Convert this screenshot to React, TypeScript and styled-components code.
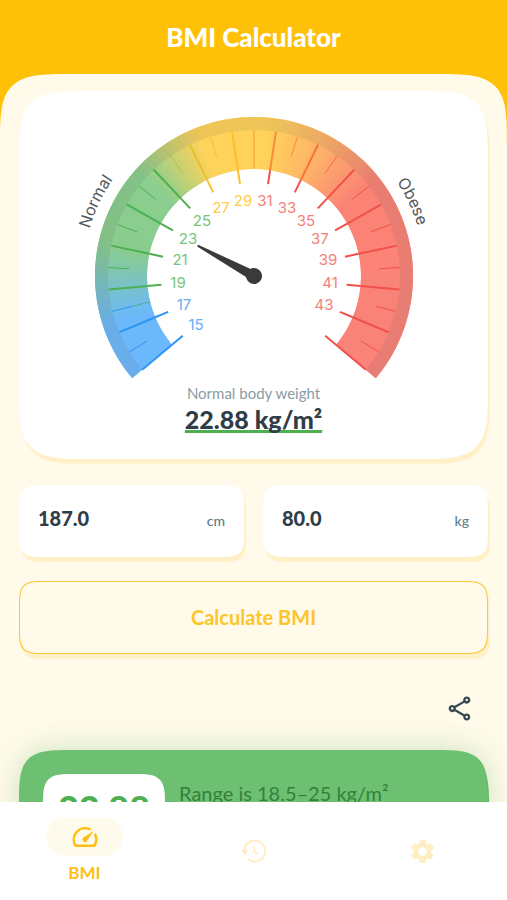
import React, { useState } from "react";
import styled, { createGlobalStyle } from "styled-components";
import { MdOutlineShare, MdOutlineSpeed, MdSettings } from "react-icons/md";

const AMBER = "#ffc107";
const CREAM = "#fffaea";
const SHADOW = "#fff0c8";
const INK = "#2f3e46";
const SLATE = "#607d8b";
const GREEN = "#4caf50";

const GlobalStyle = createGlobalStyle`
  *, *::before, *::after { box-sizing: border-box; }
  body { margin: 0; background: ${CREAM}; }
  button, input { font: inherit; }
`;

const Screen = styled.div`
  height: 100vh;
  display: flex;
  flex-direction: column;
  font-family: Lato, "Open Sans", sans-serif;
  color: ${INK};
  background: ${CREAM};
`;

const Content = styled.main`
  flex: 1;
  min-height: 0;
  overflow-y: auto;
  scrollbar-width: none;
  background: ${AMBER};
`;

const Header = styled.header`
  padding: 21px 20px;
  text-align: center;
`;

const Title = styled.h1`
  margin: 0;
  font-size: 26px;
  line-height: 32px;
  font-weight: 900;
  color: #fff;
`;

const Sheet = styled.section`
  display: flex;
  flex-direction: column;
  padding: 17px 19px 40px;
  background: ${CREAM};
  border-radius: 76px 76px 0 0;
  corner-shape: squircle;
`;

const GaugeCard = styled.section`
  display: flex;
  flex-direction: column;
  align-items: center;
  padding: 13px 16px 24px;
  background: #fff;
  border-radius: 76px;
  corner-shape: squircle;
  box-shadow: 2px 5px 1px ${SHADOW};
`;

const GaugeSvg = styled.svg`
  display: block;
  width: 100%;
  max-width: 380px;
  height: auto;
`;

const Caption = styled.p`
  margin: 3px 0 0;
  font-size: 15px;
  line-height: 20px;
  color: #8b9ca4;
`;

const Result = styled.p`
  margin: 0;
  font-size: 25px;
  line-height: 32px;
  font-weight: 900;
  text-decoration: underline 3px ${GREEN};
  text-underline-offset: 1px;
  text-decoration-skip-ink: none;
`;

const Fields = styled.div`
  display: grid;
  grid-template-columns: repeat(2, minmax(0, 1fr));
  gap: 19px;
  margin-top: 26px;
`;

const Field = styled.label`
  display: flex;
  align-items: baseline;
  gap: 8px;
  padding: 19px 19px 25px;
  background: #fff;
  border-radius: 28px;
  corner-shape: squircle;
  box-shadow: 2px 5px 1px ${SHADOW};
`;

const FieldInput = styled.input`
  flex: 1;
  width: 0;
  min-width: 0;
  height: 28px;
  padding: 0;
  border: 0;
  outline: 0;
  background: transparent;
  color: ${INK};
  font-size: 20px;
  font-weight: 900;
`;

const Unit = styled.span`
  font-size: 14px;
  line-height: 20px;
  font-weight: 500;
  color: ${SLATE};
`;

const CalculateButton = styled.button`
  margin-top: 24px;
  height: 73px;
  padding: 0 0 2px;
  border: 1px solid #f8c835;
  border-radius: 28px;
  corner-shape: squircle;
  background: ${CREAM};
  box-shadow: 2px 5px 1px ${SHADOW};
  color: #fcc52a;
  font-size: 20px;
  font-weight: 700;
`;

const ShareButton = styled.button`
  align-self: flex-end;
  display: grid;
  place-items: center;
  width: 48px;
  height: 48px;
  margin: 30px 5px 18px 0;
  padding: 0;
  border: 0;
  background: transparent;
  color: #37474f;
`;

const RangeCard = styled.section`
  display: flex;
  gap: 14px;
  padding: 24px;
  background: #6dc071;
  border-radius: 76px;
  corner-shape: squircle;
  box-shadow: 0 0 28px rgba(76, 175, 80, 0.3), 1px 5px 0 ${GREEN};
`;

const Badge = styled.div`
  padding: 14px 0;
  width: 122px;
  text-align: center;
  background: #fff;
  border-radius: 40px;
  corner-shape: squircle;
  font-size: 36px;
  line-height: 40px;
  font-weight: 900;
  color: ${GREEN};
`;

const RangeText = styled.p`
  margin: 7px 0 0;
  font-size: 20px;
  line-height: 24px;
  color: #34813a;
`;

const Nav = styled.nav`
  flex: none;
  display: grid;
  grid-template-columns: repeat(3, 1fr);
  align-items: start;
  height: 98px;
  padding-top: 16px;
  background: #fff;
`;

const NavItem = styled.button<{ $active?: boolean }>`
  display: flex;
  flex-direction: column;
  align-items: center;
  justify-content: ${(p) => (p.$active ? "flex-start" : "center")};
  height: 66px;
  padding: 0;
  border: 0;
  background: transparent;
  color: ${(p) => (p.$active ? "#fdbf14" : "#ffedc3")};
`;

const NavPill = styled.span`
  display: grid;
  place-items: center;
  width: 77px;
  height: 38px;
  border-radius: 19px;
  background: #fffbec;
`;

const NavLabel = styled.span`
  margin-top: 6px;
  font-size: 17px;
  line-height: 22px;
  font-weight: 700;
`;

type Rgb = [number, number, number];

const MIN = 15;
const MAX = 45;
const CX = 190;
const CY = 172;

const angleOf = (value: number) =>
  ((220 - ((value - MIN) / (MAX - MIN)) * 260) * Math.PI) / 180;

const pointAt = (radius: number, angle: number) =>
  `${(CX + radius * Math.cos(angle)).toFixed(2)} ${(CY - radius * Math.sin(angle)).toFixed(2)}`;

const ringPath = (from: number, to: number, inner: number, outer: number) => {
  const a = angleOf(from);
  const b = angleOf(to);
  const large = a - b > Math.PI ? 1 : 0;
  return `M${pointAt(outer, a)}A${outer} ${outer} 0 ${large} 1 ${pointAt(outer, b)}L${pointAt(inner, b)}A${inner} ${inner} 0 ${large} 0 ${pointAt(inner, a)}Z`;
};

const STOPS: [number, Rgb][] = [
  [15, [108, 184, 252]],
  [17.5, [108, 184, 250]],
  [21, [137, 205, 141]],
  [24.5, [139, 206, 143]],
  [27.5, [255, 211, 90]],
  [30.5, [255, 211, 90]],
  [33, [254, 181, 103]],
  [36, [251, 131, 117]],
  [45, [250, 131, 122]],
];

const colorAt = (value: number) => {
  const i = Math.max(1, STOPS.findIndex(([stop]) => stop >= value));
  const [v0, c0] = STOPS[i - 1];
  const [v1, c1] = STOPS[i];
  const t = (value - v0) / (v1 - v0);
  return `rgb(${c0.map((c, k) => Math.round(c + (c1[k] - c) * t)).join(",")})`;
};

const STEP = 0.25;
const SEGMENTS = Array.from({ length: (MAX - MIN) / STEP }, (_, i) => MIN + i * STEP);
const VALUES = Array.from({ length: MAX - MIN + 1 }, (_, i) => MIN + i);

const scaleColor = (value: number, blue: string, green: string, amber: string, red: string) =>
  value < 18.5 ? blue : value <= 25 ? green : value < 30 ? amber : red;

const RING_TICKS: Record<number, string> = {
  26: "#b5bf48",
  27: "#ebbf2c",
  30: "#f0953a",
  31: "#fb8a3a",
  32: "#fb8a3a",
  33: "#f9703a",
  34: "#f8683c",
};

const tickColor = (value: number) => scaleColor(value, "#2e95f2", "#4caf50", "#fbc02d", "#f2504a");

function Tick({ value }: { value: number }) {
  const a = angleOf(value);
  const major = value % 2 === 1;
  const ringColor = RING_TICKS[value] ?? tickColor(value);
  if (!major) {
    const inner = value === 30 ? 107 : 125;
    return (
      <g strokeWidth={1}>
        <path d={`M${pointAt(146, a)}L${pointAt(inner, a)}`} stroke={ringColor} />
        {value === 18 && <path d={`M${pointAt(125, a)}L${pointAt(107, a)}`} stroke="#4caf8c" />}
      </g>
    );
  }
  return (
    <g strokeWidth={2}>
      <path d={`M${pointAt(146, a)}L${pointAt(107, a)}`} stroke={ringColor} />
      <path d={`M${pointAt(107, a)}L${pointAt(93, a)}`} stroke={tickColor(value)} />
    </g>
  );
}

function Gauge({ value }: { value: number }) {
  const rotation = 180 - (angleOf(value) * 180) / Math.PI;
  return (
    <GaugeSvg viewBox="0 0 380 276" role="img" aria-label={`BMI gauge at ${value}`}>
      <defs>
        <path id="scale-label-arc" d={`M${CX - 171} ${CY}A171 171 0 0 1 ${CX + 171} ${CY}`} />
      </defs>
      {SEGMENTS.map((v) => (
        <path key={v} d={ringPath(v, Math.min(MAX, v + STEP * 2), 107, 159)} fill={colorAt(v + STEP / 2)} />
      ))}
      <path d={ringPath(MIN, MAX, 146, 159)} fill="#50504a" fillOpacity={0.1} />
      {VALUES.map((v) => (
        <Tick key={v} value={v} />
      ))}
      <g fontFamily="Inter, sans-serif" fontSize={15} textAnchor="middle">
        {VALUES.filter((v) => v % 2 === 1 && v < MAX).map((v) => {
          const a = angleOf(v);
          return (
            <text
              key={v}
              x={Math.round(CX + 76 * Math.cos(a))}
              y={Math.round(CY - 76 * Math.sin(a) + 5)}
              fill={scaleColor(v, "#64aff5", "#78c47b", "#ffcd4a", "#f2827c")}
            >
              {v}
            </text>
          );
        })}
      </g>
      <g fontFamily="Inter, sans-serif" fontSize={16} fill="#55585a" textAnchor="middle">
        <text>
          <textPath href="#scale-label-arc" startOffset="14%">
            Normal
          </textPath>
        </text>
        <text>
          <textPath href="#scale-label-arc" startOffset="86%">
            Obese
          </textPath>
        </text>
      </g>
      <g fill="#3a3a3a" transform={`rotate(${rotation} ${CX} ${CY})`}>
        <path d={`M${CX - 64} ${CY - 1}L${CX} ${CY - 5}V${CY + 5}L${CX - 64} ${CY + 1}Z`} />
        <circle cx={CX} cy={CY} r={8} />
      </g>
    </GaugeSvg>
  );
}

function HistoryIcon() {
  return (
    <svg width={28} height={28} viewBox="0 0 28 28" fill="none" stroke="currentColor" strokeLinecap="round" aria-hidden>
      <path d="M4.3 13.5A10.4 10.4 0 1 1 8.3 22.2" strokeWidth={2} />
      <path d="M2.2 13.6H7.4L4.7 17Z" fill="currentColor" strokeWidth={1.4} strokeLinejoin="round" />
      <path d="M14.2 9.5V14.5L18.2 17" strokeWidth={1.5} />
    </svg>
  );
}

export default function App() {
  const [height, setHeight] = useState("187.0");
  const [weight, setWeight] = useState("80.0");
  const [bmi, setBmi] = useState(22.88);

  const calculate = () => {
    const metres = Number(height) / 100;
    const next = Number(weight) / (metres * metres);
    if (Number.isFinite(next)) setBmi(Math.round(next * 100) / 100);
  };

  return (
    <Screen>
      <GlobalStyle />
      <Content>
        <Header>
          <Title>BMI Calculator</Title>
        </Header>
        <Sheet>
          <GaugeCard>
            <Gauge value={Math.min(MAX, Math.max(MIN, bmi))} />
            <Caption>Normal body weight</Caption>
            <Result>{bmi.toFixed(2)} kg/m²</Result>
          </GaugeCard>
          <Fields>
            <Field>
              <FieldInput
                inputMode="decimal"
                aria-label="Height"
                value={height}
                onChange={(e) => setHeight(e.target.value)}
              />
              <Unit>cm</Unit>
            </Field>
            <Field>
              <FieldInput
                inputMode="decimal"
                aria-label="Weight"
                value={weight}
                onChange={(e) => setWeight(e.target.value)}
              />
              <Unit>kg</Unit>
            </Field>
          </Fields>
          <CalculateButton type="button" onClick={calculate}>
            Calculate BMI
          </CalculateButton>
          <ShareButton type="button" aria-label="Share">
            <MdOutlineShare size={29} />
          </ShareButton>
          <RangeCard>
            <Badge>{bmi.toFixed(2)}</Badge>
            <RangeText>Range is 18.5–25 kg/m²</RangeText>
          </RangeCard>
        </Sheet>
      </Content>
      <Nav>
        <NavItem type="button" $active aria-current="page">
          <NavPill>
            <MdOutlineSpeed size={30} />
          </NavPill>
          <NavLabel>BMI</NavLabel>
        </NavItem>
        <NavItem type="button" aria-label="History">
          <HistoryIcon />
        </NavItem>
        <NavItem type="button" aria-label="Settings">
          <MdSettings size={29} />
        </NavItem>
      </Nav>
    </Screen>
  );
}
